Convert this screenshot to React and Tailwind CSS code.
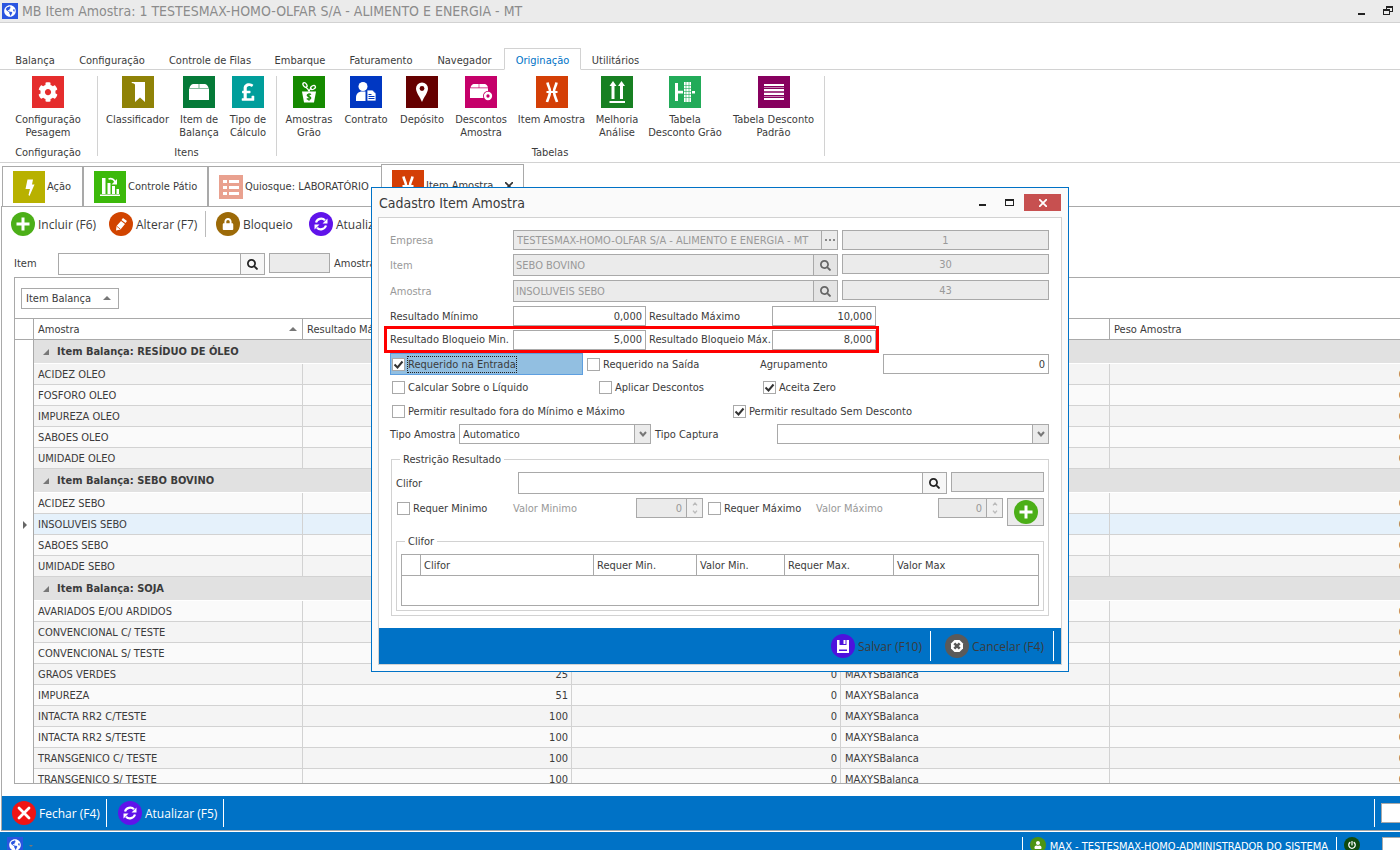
import { useState } from "react";
import { FaCog, FaPoundSign, FaSearch, FaLock, FaGlobeAmericas, FaPowerOff, FaUser } from "react-icons/fa";

const BookmarkIcon = () => (
  <svg viewBox="0 0 32 32" className="size-8" fill="#fff">
    <path d="M10 6h13v20l-5-4.500-5 4.500V9c0-1-1-2-3.500-2z" />
  </svg>
);

const BoxIcon = () => (
  <svg viewBox="0 0 32 32" className="size-8" fill="#fff">
    <path d="M10 8H15.700v4H6.500C7 10 8 8.500 10 8zM16.300 8H22c2 .5 3 2 3.500 4h-9.200zM6 12.600h20V24H6z" />
  </svg>
);

const PinIcon = () => (
  <svg viewBox="0 0 32 32" className="size-8">
    <path d="M16 26c-2-5-6-9.500-6-13.500a6 6 0 0 1 12 0c0 4-4 8.500-6 13.500z" fill="#fff" />
    <circle cx="16" cy="12.500" r="2.400" fill="#650000" />
  </svg>
);

const PlantIcon = () => (
  <svg viewBox="0 0 32 32" className="size-8">
    <path d="M9 15.500h14l-2 11H11z" fill="#fff" />
    <path d="M16 15.500c-.5-2.500-2-3.500-3.500-4.500" fill="none" stroke="#fff" strokeWidth="1.200" />
    <path d="M16 15.500c.5-2 1.500-3 2.500-3.500" fill="none" stroke="#fff" strokeWidth="1.200" />
    <ellipse cx="12" cy="9" rx="1.700" ry="2.600" transform="rotate(-35 12 9)" fill="none" stroke="#fff" strokeWidth="1.300" />
    <ellipse cx="20" cy="11.500" rx="2.600" ry="1.700" transform="rotate(-30 20 11.500)" fill="none" stroke="#fff" strokeWidth="1.300" />
    <path d="M18 18.600c-1-1-4-.8-3.800.8.200 1.500 3.600.9 3.600 2.600 0 1.500-2.900 1.600-4 .5M16 17.300v7.500" fill="none" stroke="#158a00" strokeWidth="1.200" />
  </svg>
);

const ContractIcon = () => (
  <svg viewBox="0 0 32 32" className="size-8">
    <circle cx="13" cy="10.500" r="4.500" fill="#fff" />
    <path d="M6 25v-3.500c0-4 3-6 6-6h3.500V25z" fill="#fff" />
    <path d="M17 14h5.500l3.500 3.500V25h-9z" fill="#fff" stroke="#0037c2" strokeWidth=".8" />
    <path d="M18.500 18.500h3M18.500 20.500h6M18.500 22.500h6" stroke="#0037c2" strokeWidth="1" />
  </svg>
);

const BoxDiscIcon = () => (
  <svg viewBox="0 0 32 32" className="size-8">
    <path d="M8.500 8h5.200v3.500H5.500c.5-2 1.500-3 3-3.500zM14.300 8H20c1.500.5 2.500 1.500 3 3.500h-8.700zM5 12.200h18V22H5z" fill="#fff" />
    <circle cx="23" cy="20" r="5" fill="#c5006a" />
    <circle cx="23" cy="20" r="2.900" fill="none" stroke="#fff" strokeWidth="2.500" />
  </svg>
);

const SampleIcon = () => (
  <svg viewBox="0 0 32 32" className="size-8" fill="none" stroke="#fff" strokeWidth="2.600">
    <path d="M11.500 6.500c.5 4 2.500 5 2.500 9s-2 6.500-3 10.500M20.500 6.500c-.5 4-2.500 5-2.500 9s2 6.500 3 10.500" />
    <path d="M10.500 16h11" strokeWidth="2" />
  </svg>
);

const ArrowsUpIcon = () => (
  <svg viewBox="0 0 32 32" className="size-8" fill="#fff">
    <path d="M8.500 10l3.500-5 3.500 5h-2v13h-3V10zM17 10l3.500-5 3.500 5h-2v13h-3V10zM8.500 25h15.500v2H8.500z" />
  </svg>
);

const GrainTableIcon = () => (
  <svg viewBox="0 0 32 32" className="size-8">
    <path d="M6 7h3v18H6zM9 14.800h5v2.600H9zM23 15h3v2.500h-3z" fill="#fff" />
    <path d="M15 6h7v20h-7z" fill="#fff" />
    <path d="M17 6v20M20 6v20M15 9.500h7M15 12.500h7M15 15.500h7M15 18.500h7M15 21.500h7" stroke="#22ab59" strokeWidth=".6" />
  </svg>
);

const LinesIcon = () => (
  <svg viewBox="0 0 32 32" className="size-8">
    <path d="M6 9h20M6 14h20M6 18h20M6 23h20" stroke="#fff" strokeWidth="2" />
    <path d="M6 11.500h20M6 16h20M6 20.500h20" stroke="#c281af" strokeWidth="1" />
  </svg>
);

const BoltIcon = () => (
  <svg viewBox="0 0 32 32" className="size-8" fill="#fff">
    <path d="M14.500 8.500H20l-1 5h2.500L16.500 25l-1-1 1.500-6h-4.500z" />
  </svg>
);

const BarsIcon = () => (
  <svg viewBox="0 0 32 32" className="size-8" fill="#fff">
    <path d="M8 7h3.500v16H8zM13.500 12h3v11h-3zM18 15h3v8h-3zM22.500 18h2.500v5h-2.500zM6 23.500h20V25H6z" />
    <path d="M14.500 8c3.500-1 6 .5 6.500 3" fill="none" stroke="#fff" strokeWidth="1.800" />
    <path d="M23 8v5.500h-5.500z" />
  </svg>
);

const KioskIcon = () => (
  <svg viewBox="0 0 24 24" className="size-6">
    <path d="M0 0h24v24H0z" fill="#e9a18f" />
    <path d="M4 5h4v3H4zM10 5h10v3H10zM4 11h4v3H4zM10 11h10v3H10zM4 17h4v3H4zM10 17h10v3H10z" fill="#fff" />
  </svg>
);

const PlusIcon = () => (
  <svg viewBox="0 0 24 24" className="size-6 rounded-full bg-[#4caf18]">
    <path d="M12 5.500v13M5.500 12h13" stroke="#fff" strokeWidth="3" />
  </svg>
);

const PencilIcon = () => (
  <svg viewBox="0 0 24 24" className="size-6 rounded-full bg-[#d14400]" fill="#fff">
    <path d="M14 6l4 3-1.500 2-4-3zM12 9l4 3-4.500 5.500L7 18.500l.5-4.500z" />
    <path d="M7.500 14l4 3.300" stroke="#d14400" strokeWidth=".8" />
  </svg>
);

const DiskIcon = () => (
  <svg viewBox="0 0 24 24" className="size-6 rounded-full bg-[#4d12dd]">
    <path d="M6 6h12v13H6z" fill="#fff" />
    <path d="M8.500 6h7v5h-7zM8 15.500h8v1.500H8z" fill="#4d12dd" />
    <path d="M12.500 6h2v4h-2z" fill="#fff" />
  </svg>
);

const CancelIcon = () => (
  <svg viewBox="0 0 24 24" className="size-6 rounded-full bg-[#5a5a5a]">
    <path d="M9.500 6h5L18 9.500v5L14.500 18h-5L6 14.500v-5z" fill="#fff" />
    <path d="M9.300 9.300l5.400 5.400M14.700 9.300l-5.400 5.400" stroke="#5a5a5a" strokeWidth="2.600" />
  </svg>
);

const CloseRoundIcon = () => (
  <svg viewBox="0 0 24 24" className="size-6 rounded-full bg-[#f01414]">
    <path d="M7 7l10 10M17 7L7 17" stroke="#fff" strokeWidth="2.800" strokeLinecap="round" />
  </svg>
);

const SyncIcon = () => (
  <svg viewBox="0 0 24 24" className="size-6 rounded-full bg-[#6013ea]">
    <path d="M7 10.500a5.400 5.400 0 0 1 9-2.200M17 13.500a5.400 5.400 0 0 1-9 2.200" fill="none" stroke="#fff" strokeWidth="2.200" />
    <path d="M18.500 6.500v5h-5zM5.500 17.500v-5h5z" fill="#fff" />
  </svg>
);

const LockIcon = () => (
  <span className="flex size-6 items-center justify-center rounded-full bg-[#9c6a08] text-white">
    <FaLock className="size-3" />
  </span>
);

const Chevron = ({ up = false, className = "" }) => (
  <svg viewBox="0 0 8 6" className={className} fill="none" stroke="currentColor" strokeWidth="2">
    <path d={up ? "M1 5l3-3.500L7 5" : "M1 1l3 3.500L7 1"} />
  </svg>
);

const menus = [
  { name: "Balança", width: "w-[64px]" },
  { name: "Configuração", width: "w-[90px]" },
  { name: "Controle de Filas", width: "w-[106px]" },
  { name: "Embarque", width: "w-[74px]" },
  { name: "Faturamento", width: "w-[88px]" },
  { name: "Navegador", width: "w-[79px]" },
  { name: "Originação", width: "w-[77px]" },
  { name: "Utilitários", width: "w-[69px]" },
];

const ribbon = [
  {
    title: "Configuração",
    items: [{ label: "Configuração\nPesagem", width: "w-[90px]", bg: "bg-[#e52d2d]", icon: <FaCog className="size-5" /> }],
  },
  {
    title: "Itens",
    items: [
      { label: "Classificador", width: "w-[73px]", bg: "bg-[#8f8207]", icon: <BookmarkIcon /> },
      { label: "Item de\nBalança", width: "w-[50px]", bg: "bg-[#057a38]", icon: <BoxIcon /> },
      { label: "Tipo de\nCálculo", width: "w-[48px]", bg: "bg-[#009e9b]", icon: <FaPoundSign className="size-5" /> },
    ],
  },
  {
    title: "Tabelas",
    items: [
      { label: "Amostras\nGrão", width: "w-[58px]", bg: "bg-[#158a00]", icon: <PlantIcon /> },
      { label: "Contrato", width: "w-[56px]", bg: "bg-[#0037c2]", icon: <ContractIcon /> },
      { label: "Depósito", width: "w-[56px]", bg: "bg-[#650000]", icon: <PinIcon /> },
      { label: "Descontos\nAmostra", width: "w-[62px]", bg: "bg-[#c5006a]", icon: <BoxDiscIcon /> },
      { label: "Item Amostra", width: "w-[79px]", bg: "bg-[#d43f06]", icon: <SampleIcon /> },
      { label: "Melhoria\nAnálise", width: "w-[52px]", bg: "bg-[#178022]", icon: <ArrowsUpIcon /> },
      { label: "Tabela\nDesconto Grão", width: "w-[84px]", bg: "bg-[#22ab59]", icon: <GrainTableIcon /> },
      { label: "Tabela Desconto\nPadrão", width: "w-[93px]", bg: "bg-[#87005f]", icon: <LinesIcon /> },
    ],
  },
];

const groups = [
  {
    name: "RESÍDUO DE ÓLEO",
    rows: [["ACIDEZ OLEO"], ["FOSFORO OLEO"], ["IMPUREZA OLEO"], ["SABOES OLEO"], ["UMIDADE OLEO"]],
  },
  {
    name: "SEBO BOVINO",
    rows: [["ACIDEZ SEBO"], ["INSOLUVEIS SEBO"], ["SABOES SEBO"], ["UMIDADE SEBO"]],
  },
  {
    name: "SOJA",
    rows: [
      ["AVARIADOS E/OU ARDIDOS", 100],
      ["CONVENCIONAL C/ TESTE", 100],
      ["CONVENCIONAL S/ TESTE", 100],
      ["GRAOS VERDES", 25],
      ["IMPUREZA", 51],
      ["INTACTA RR2 C/TESTE", 100],
      ["INTACTA RR2 S/TESTE", 100],
      ["TRANSGENICO C/ TESTE", 100],
      ["TRANSGENICO S/ TESTE", 100],
    ],
  },
];

function TitleBar() {
  return (
    <header className="flex h-[23px] shrink-0 items-center border-b border-[#d2d2d2] bg-[#ebebeb] pl-[2px] pr-[7px]">
      <span className="flex size-4 items-center justify-center bg-[#2a55e0] text-white">
        <FaGlobeAmericas className="size-3" />
      </span>
      <h1 className="ml-1 flex-1 text-[14px] leading-4 text-[#8c8c8c]">MB Item Amostra: 1 TESTESMAX-HOMO-OLFAR S/A - ALIMENTO E ENERGIA - MT</h1>
      <button aria-label="Minimizar" className="mr-[18px] mt-[5px] h-[2px] w-[7px] bg-[#222]" />
      <button aria-label="Restaurar" className="text-[#222]">
        <svg viewBox="0 0 10 10" className="size-[10px]" fill="currentColor">
          <path d="M3 0h7v6H7V5h2V2H4v1H3zM0 3h7v6H0zM1 5v3h5V5z" fillRule="evenodd" />
        </svg>
      </button>
    </header>
  );
}

function Ribbon() {
  const [active, setActive] = useState("Originação");
  return (
    <>
      <nav className="flex h-[47px] shrink-0 items-end border-b border-[#d2d2d2] pl-[3px]">
        {menus.map((m) => (
          <button
            key={m.name}
            onClick={() => setActive(m.name)}
            className={`${m.width} -mb-px flex h-[22px] items-center justify-center whitespace-nowrap border pt-[3px] ${
              active === m.name ? "border-[#d2d2d2] border-b-white bg-white text-[#0072c6]" : "border-transparent"
            }`}
          >
            {m.name}
          </button>
        ))}
      </nav>
      <div className="flex h-[93px] shrink-0 border-b border-[#d2d2d2] py-[6px]">
        {ribbon.map((g) => (
          <section key={g.title} className="flex flex-col justify-between border-r border-[#d2d2d2] pl-[3px] pr-1">
            <div className="flex">
              {g.items.map((item) => (
                <button key={item.label} className={`${item.width} flex flex-col items-center gap-[5px] leading-[13px]`}>
                  <span className={`${item.bg} flex size-8 items-center justify-center text-white`}>{item.icon}</span>
                  <span className="whitespace-pre">{item.label}</span>
                </button>
              ))}
            </div>
            <h2 className="h-[6px] text-center leading-[6px]">{g.title}</h2>
          </section>
        ))}
      </div>
    </>
  );
}

function DocumentTabs() {
  const tab = "flex items-center gap-[2px] whitespace-nowrap border border-b-0 border-[#a9a9a9] pl-[10px]";
  return (
    <div className="flex h-[43px] shrink-0 items-end pl-[2px]">
      <button className={`${tab} h-10 w-[81px]`}>
        <span className="bg-[#b8b100]">
          <BoltIcon />
        </span>
        Ação
      </button>
      <button className={`${tab} h-10 w-[125px]`}>
        <span className="bg-[#3cb90b]">
          <BarsIcon />
        </span>
        Controle Pátio
      </button>
      <button className={`${tab} h-10 w-[173px] border-r-0`}>
        <KioskIcon />
        Quiosque: LABORATÓRIO
      </button>
      <button className={`${tab} h-[42px] w-[143px] bg-white`}>
        <span className="bg-[#d43f06]">
          <SampleIcon />
        </span>
        Item Amostra
        <svg viewBox="0 0 8 8" className="ml-[10px] size-2" stroke="#333" strokeWidth="1.600">
          <path d="M0 0l8 8M8 0L0 8" />
        </svg>
      </button>
    </div>
  );
}

function ToolButton({ icon, label, className = "" }) {
  return (
    <button className={`flex items-center gap-[3px] whitespace-nowrap font-['Open_Sans',sans-serif] text-[12px] ${className}`}>
      {icon}
      {label}
    </button>
  );
}

function SearchField({ id, value, disabled = false, className = "" }) {
  return (
    <div className={`flex h-[22px] border border-[#a9a9a9] ${disabled ? "bg-[#ebebeb]" : "bg-white"} ${className}`}>
      <input id={id} defaultValue={value} disabled={disabled} className="min-w-0 flex-1 px-[2px] outline-none" />
      <button
        aria-label="Pesquisar"
        disabled={disabled}
        className={`flex w-6 items-center justify-center border-l border-[#a9a9a9] ${disabled ? "bg-[#e4e4e4] text-[#666]" : "bg-[#f6f6f6] text-[#222]"}`}
      >
        <FaSearch className="size-[11px]" />
      </button>
    </div>
  );
}

function Grid() {
  let index = -1;
  return (
    <div className="ml-3 flex min-h-0 flex-1 flex-col overflow-hidden border border-r-0 border-[#a9a9a9]">
      <div className="flex h-10 shrink-0 items-center pl-[6px]">
        <button className="flex h-[21px] w-[98px] items-center justify-between border border-[#a9a9a9] pl-1 pr-[7px]">
          Item Balança
          <span className="size-0 border-x-4 border-b-4 border-x-transparent border-b-[#777]" />
        </button>
      </div>
      <table className="w-[1394px] table-fixed border-separate border-spacing-0 text-left">
        <colgroup>
          <col className="w-[19px]" />
          <col className="w-[269px]" />
          <col className="w-[269px]" />
          <col className="w-[269px]" />
          <col className="w-[269px]" />
          <col />
        </colgroup>
        <thead>
          <tr className="h-[22px]">
            {["", "Amostra", "Resultado Máximo", "Resultado Mínimo", "Sistema", "Peso Amostra"].map((h) => (
              <th key={h} className="border-y border-r border-[#a9a9a9] pl-1 pr-[3px] font-normal">
                <span className="flex items-center justify-between">
                  {h}
                  {h === "Amostra" && <span className="mr-[2px] size-0 border-x-4 border-b-4 border-x-transparent border-b-[#777]" />}
                </span>
              </th>
            ))}
          </tr>
        </thead>
        <tbody>
          {groups.map((g) => [
            <tr key={g.name} className="h-6">
              <td className="border-r border-[#a9a9a9]" />
              <td colSpan={5} className="border-b border-white bg-[#e1e1e1] font-bold">
                <span className="flex items-center gap-2 pl-[9px]">
                  <span className="size-0 border-b-[6px] border-l-[6px] border-b-[#777] border-l-transparent" />
                  Item Balança: {g.name}
                </span>
              </td>
            </tr>,
            ...g.rows.map(([name, max = 100]) => {
              index += 1;
              const selected = name === "INSOLUVEIS SEBO";
              const bg = selected ? "bg-[#e5f1fb]" : index % 2 ? "bg-[#fafafa]" : "bg-[#f4f4f4]";
              const cell = "border-b border-r border-[#d2d2d2] pl-1 pr-[3px]";
              return (
                <tr key={name} className="h-[21px]">
                  <td className="border-r border-[#a9a9a9]">
                    {selected && <span className="ml-2 block size-0 border-y-4 border-l-4 border-y-transparent border-l-[#666]" />}
                  </td>
                  <td className={`${cell} ${bg}`}>{name}</td>
                  <td className={`${cell} ${bg} text-right`}>{max}</td>
                  <td className={`${cell} ${bg} text-right`}>0</td>
                  <td className={`${cell} ${bg}`}>MAXYSBalanca</td>
                  <td className={`${cell} ${bg} text-right`}>0</td>
                </tr>
              );
            }),
          ])}
        </tbody>
      </table>
    </div>
  );
}

function TextField({ id, value, disabled = false, label, className = "" }) {
  return (
    <input
      id={id}
      aria-label={label}
      defaultValue={value}
      disabled={disabled}
      className={`h-5 border border-[#a9a9a9] px-[3px] outline-none ${disabled ? "bg-[#ebebeb] text-[#999]" : "bg-white"} ${className}`}
    />
  );
}

function Check({ label, checked = false, focused = false, className = "" }) {
  return (
    <label className={`flex items-center gap-[3px] whitespace-nowrap ${className}`}>
      <span className="relative flex size-[13px] shrink-0">
        <input type="checkbox" defaultChecked={checked} className="peer size-[13px] appearance-none border border-[#a9a9a9] bg-white" />
        <svg viewBox="0 0 13 13" className="pointer-events-none absolute inset-0 hidden size-[13px] peer-checked:block" fill="none" stroke="#333" strokeWidth="2">
          <path d="M2.500 6.500l3 3 5-6" />
        </svg>
      </span>
      <span className={focused ? "outline-1 outline-dotted outline-[#222]" : ""}>{label}</span>
    </label>
  );
}

function Select({ id, options, className = "" }) {
  return (
    <div className={`relative h-5 ${className}`}>
      <select id={id} className="size-full appearance-none border border-[#a9a9a9] bg-white px-[3px] outline-none">
        {options.map((o) => (
          <option key={o}>{o}</option>
        ))}
      </select>
      <span className="pointer-events-none absolute inset-y-0 right-0 flex w-[17px] items-center justify-center border border-[#a9a9a9] bg-[#ebebeb] text-[#777]">
        <Chevron className="h-[6px] w-2" />
      </span>
    </div>
  );
}

function Spinner({ id, className = "" }) {
  return (
    <div className={`flex h-5 border border-[#a9a9a9] bg-[#ebebeb] text-[#999] ${className}`}>
      <input id={id} defaultValue="0" disabled className="min-w-0 flex-1 pr-1 text-right" />
      <span className="flex w-4 flex-col items-center justify-evenly border-l border-[#a9a9a9] bg-[#f0f0f0] text-[#bbb]">
        <button aria-label="Aumentar" disabled>
          <Chevron up className="h-1 w-[6px]" />
        </button>
        <button aria-label="Diminuir" disabled>
          <Chevron className="h-1 w-[6px]" />
        </button>
      </span>
    </div>
  );
}

function SampleDialog() {
  return (
    <div role="dialog" aria-label="Cadastro Item Amostra" className="absolute left-[371px] top-[187px] w-[698px] border border-[#0072c6] bg-[#fafafa] px-[6px] pb-[6px]">
      <div className="flex h-[29px] items-center">
        <h2 className="flex-1 pl-px text-[14px] leading-4">Cadastro Item Amostra</h2>
        <button aria-label="Minimizar" className="mr-[19px] mt-[5px] h-[2px] w-[7px] bg-[#222]" />
        <button aria-label="Maximizar" className="mr-[10px] h-[7px] w-[9px] border border-t-2 border-[#222]" />
        <button aria-label="Fechar" className="mr-px flex h-[17px] w-[37px] items-center justify-center bg-[#c75050]">
          <svg viewBox="0 0 8 8" className="size-2" stroke="#fff" strokeWidth="1.800">
            <path d="M0 0l8 8M8 0L0 8" />
          </svg>
        </button>
      </div>
      <form className="border border-[#d2d2d2] bg-white" onSubmit={(e) => e.preventDefault()}>
        <div className="px-[11px] pb-3 pt-3">
          <div className="mb-1 flex h-5 items-center text-[#999]">
            <label htmlFor="empresa" className="w-[123px]">Empresa</label>
            <div className="flex h-5 w-[325px] border border-[#a9a9a9] bg-[#ebebeb]">
              <input id="empresa" disabled defaultValue="TESTESMAX-HOMO-OLFAR S/A - ALIMENTO E ENERGIA - MT" className="min-w-0 flex-1 px-[3px]" />
              <button disabled aria-label="Selecionar empresa" className="flex w-4 items-center justify-center gap-[2px] border-l border-[#a9a9a9]">
                <i className="size-[2px] bg-[#888]" />
                <i className="size-[2px] bg-[#888]" />
                <i className="size-[2px] bg-[#888]" />
              </button>
            </div>
            <TextField label="Código da empresa" value="1" disabled className="ml-1 w-[207px] text-center" />
          </div>
          <div className="mb-1 flex h-[22px] text-[#999]">
            <label htmlFor="item" className="w-[123px] leading-[23px]">Item</label>
            <SearchField id="item" value="SEBO BOVINO" disabled className="w-[325px]" />
            <TextField label="Código do item" value="30" disabled className="ml-1 w-[207px] text-center" />
          </div>
          <div className="mb-1 flex h-[22px] text-[#999]">
            <label htmlFor="amostra" className="w-[123px] leading-[23px]">Amostra</label>
            <SearchField id="amostra" value="INSOLUVEIS SEBO" disabled className="w-[325px]" />
            <TextField label="Código da amostra" value="43" disabled className="ml-1 w-[207px] text-center" />
          </div>
          <div className="flex h-5 items-center whitespace-nowrap">
            <label htmlFor="min" className="w-[123px]">Resultado Mínimo</label>
            <TextField id="min" value="0,000" className="w-[133px] text-right" />
            <label htmlFor="max" className="ml-[3px] w-[123px]">Resultado Máximo</label>
            <TextField id="max" value="10,000" className="w-[104px] text-right" />
          </div>
          <div className="-ml-[6px] flex h-[27px] w-[495px] items-center whitespace-nowrap border-[3px] border-[#ff0000] pl-[3px]">
            <label htmlFor="bmin" className="w-[123px]">Resultado Bloqueio Min.</label>
            <TextField id="bmin" value="5,000" className="w-[133px] text-right" />
            <label htmlFor="bmax" className="ml-[3px] w-[123px]">Resultado Bloqueio Máx.</label>
            <TextField id="bmax" value="8,000" className="w-[104px] text-right" />
          </div>
          <div className="flex h-[22px] items-center">
            <Check label="Requerido na Entrada" checked focused className="h-[22px] w-[193px] border border-[#5e9fe0] bg-[#92bfe1] pl-px" />
            <Check label="Requerido na Saída" className="ml-1 w-[173px]" />
            <label htmlFor="agrup" className="w-[123px]">Agrupamento</label>
            <TextField id="agrup" value="0" className="w-[166px] text-right" />
          </div>
          <div className="flex h-[25px] items-center pl-[2px]">
            <Check label="Calcular Sobre o Líquido" className="w-[207px]" />
            <Check label="Aplicar Descontos" className="w-[164px]" />
            <Check label="Aceita Zero" checked />
          </div>
          <div className="flex h-[22px] items-center pl-[2px]">
            <Check label="Permitir resultado fora do Mínimo e Máximo" className="w-[341px]" />
            <Check label="Permitir resultado Sem Desconto" checked />
          </div>
          <div className="mt-[2px] flex h-5 items-center whitespace-nowrap">
            <label htmlFor="tipo" className="w-[69px]">Tipo Amostra</label>
            <Select id="tipo" options={["Automatico", "Manual"]} className="w-[192px]" />
            <label htmlFor="captura" className="ml-1 w-[122px]">Tipo Captura</label>
            <Select id="captura" options={[""]} className="w-[272px]" />
          </div>
          <fieldset className="mx-px mt-2 border border-[#d2d2d2] px-1 pb-1">
            <legend className="ml-1 px-[3px] leading-[15px]">Restrição Resultado</legend>
            <div className="mt-[5px] flex h-[22px]">
              <label htmlFor="clifor" className="w-[122px] leading-[23px]">Clifor</label>
              <SearchField id="clifor" className="w-[429px]" />
              <TextField label="Código do clifor" disabled className="ml-1 w-[93px]" />
            </div>
            <div className="mt-1 flex h-7 items-start">
              <Check label="Requer Minimo" className="h-5 w-[117px] pl-px" />
              <label htmlFor="vmin" className="w-[123px] leading-[21px] text-[#999]">Valor Minimo</label>
              <Spinner id="vmin" className="w-[67px]" />
              <Check label="Requer Máximo" className="ml-[5px] h-5 w-[108px]" />
              <label htmlFor="vmax" className="w-[122px] leading-[21px] text-[#999]">Valor Máximo</label>
              <Spinner id="vmax" className="w-[65px]" />
              <button aria-label="Adicionar restrição" className="ml-1 flex h-7 w-[37px] items-center justify-center border border-[#a9a9a9] bg-[#ebebeb]">
                <PlusIcon />
              </button>
            </div>
            <fieldset className="mt-2 border border-[#d2d2d2] p-1 pt-[5px]">
              <legend className="ml-1 px-[3px] leading-[15px]">Clifor</legend>
              <div className="h-[52px] border border-[#a9a9a9]">
                <table className="w-full table-fixed border-separate border-spacing-0 text-left">
                  <thead>
                    <tr className="h-[21px]">
                      <th className="w-[19px] border-b border-r border-[#a9a9a9]" />
                      <th className="w-[173px] border-b border-r border-[#a9a9a9] px-[3px] font-normal">Clifor</th>
                      <th className="w-[103px] border-b border-r border-[#a9a9a9] px-[3px] font-normal">Requer Min.</th>
                      <th className="w-[88px] border-b border-r border-[#a9a9a9] px-[3px] font-normal">Valor Min.</th>
                      <th className="w-[109px] border-b border-r border-[#a9a9a9] px-[3px] font-normal">Requer Max.</th>
                      <th className="border-b border-[#a9a9a9] px-[3px] font-normal">Valor Max</th>
                    </tr>
                  </thead>
                </table>
              </div>
            </fieldset>
          </fieldset>
        </div>
        <div className="flex h-9 items-center justify-end bg-[#0072c6] pr-[7px]">
          <ToolButton icon={<DiskIcon />} label="Salvar (F10)" className="w-[99px]" />
          <span className="mr-[14px] h-[30px] w-px bg-white" />
          <ToolButton icon={<CancelIcon />} label="Cancelar (F4)" className="w-[108px]" />
          <span className="h-[30px] w-px bg-white" />
        </div>
      </form>
    </div>
  );
}

export default function App() {
  return (
    <div className="relative flex h-screen flex-col overflow-hidden bg-white font-['DejaVu_Sans_Condensed','DejaVu_Sans',sans-serif] text-[11px] leading-[15px] text-[#3b3b3b]">
      <TitleBar />
      <Ribbon />
      <DocumentTabs />
      <main className="ml-px flex min-h-0 flex-1 flex-col border-l border-t border-[#a9a9a9]">
        <div className="flex h-[34px] shrink-0 items-center pl-[9px]">
          <ToolButton icon={<PlusIcon />} label="Incluir (F6)" className="w-[98px]" />
          <ToolButton icon={<PencilIcon />} label="Alterar (F7)" className="w-[96px]" />
          <span className="mr-[10px] h-[26px] w-px bg-[#bbb]" />
          <ToolButton icon={<LockIcon />} label="Bloqueio" className="w-[93px]" />
          <ToolButton icon={<SyncIcon />} label="Atualizar (F5)" />
        </div>
        <div className="mb-[2px] flex h-[34px] shrink-0 items-end pl-3">
          <label htmlFor="filtro-item" className="w-11 leading-[22px]">Item</label>
          <SearchField id="filtro-item" className="w-[207px]" />
          <TextField label="Código do item" disabled className="mb-[2px] ml-1 w-[61px]" />
          <span className="ml-1 leading-[22px]">Amostra</span>
        </div>
        <Grid />
        <div className="mt-3 flex h-[35px] shrink-0 items-center border-b border-[#a9a9a9] bg-[#0072c6] pl-[10px] text-white">
          <ToolButton icon={<CloseRoundIcon />} label="Fechar (F4)" className="w-[94px]" />
          <span className="mr-[11px] h-7 w-px bg-white" />
          <ToolButton icon={<SyncIcon />} label="Atualizar (F5)" className="w-[105px]" />
          <span className="h-7 w-px bg-white" />
          <span className="ml-auto mr-[6px] h-7 w-px bg-white" />
          <TextField label="Registro" className="w-[19px] border-r-0" />
        </div>
      </main>
      <footer className="mt-px flex h-[18px] shrink-0 items-start overflow-hidden bg-[#0072c6] pl-[7px] pt-[5px] text-white">
        <span className="flex size-4 items-center justify-center bg-[#2a55e0]">
          <FaGlobeAmericas className="size-3" />
        </span>
        <span className="ml-[6px] mt-2 size-0 border-x-2 border-t-2 border-x-transparent border-t-[#777]" />
        <span className="ml-auto h-6 w-px bg-white" />
        <span className="ml-[7px] flex size-4 items-center justify-center rounded-full bg-[#4c9413]">
          <FaUser className="size-2" />
        </span>
        <span className="ml-1 mt-[2px] whitespace-nowrap">MAX - TESTESMAX-HOMO-ADMINISTRADOR DO SISTEMA</span>
        <span className="ml-2 mr-[7px] h-6 w-px bg-white" />
        <button aria-label="Sair" className="mr-[22px] flex size-4 items-center justify-center rounded-full bg-[#0f4a0f]">
          <FaPowerOff className="size-2" />
        </button>
        <TextField label="Status" className="w-[18px] border-r-0" />
      </footer>
      <SampleDialog />
    </div>
  );
}
